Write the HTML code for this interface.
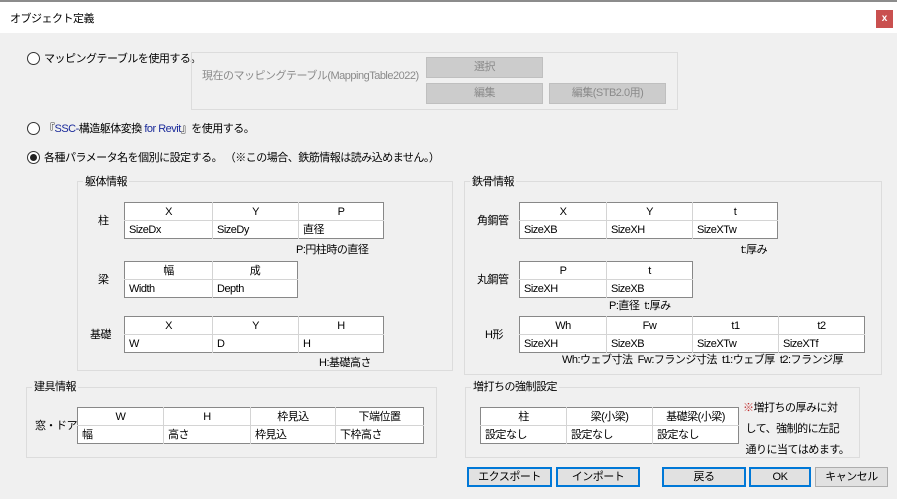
<!DOCTYPE html>
<html><head><meta charset="utf-8"><style>
*{margin:0;padding:0;box-sizing:border-box}
body{width:897px;height:499px;background:#f0f0f0;font-family:"Liberation Sans","Noto Sans CJK JP",sans-serif;font-size:11px;letter-spacing:-0.5px;color:#000;position:relative;overflow:hidden}
.a{position:absolute;white-space:nowrap;line-height:14px;margin-top:1px}
.title{position:absolute;left:0;top:0;width:897px;height:33px;background:#fff;border-top:2px solid #8c8c8c}
.close{position:absolute;left:876px;top:10px;width:17px;height:18px;background:#c9504f;color:#fff;font-size:10px;font-weight:bold;text-align:center;line-height:17px;letter-spacing:0}
.radio{position:absolute;width:13px;height:13px;border:1px solid #333;border-radius:50%;background:#fff}
.radio.on::after{content:"";position:absolute;left:2px;top:2px;width:7px;height:7px;border-radius:50%;background:#222}
.grp{position:absolute;border:1px solid #dcdcdc}
.gl{position:absolute;background:#f0f0f0;padding:0 2px;line-height:14px;white-space:nowrap}
.btn{position:absolute;background:#cccccc;border:1px solid #bfbfbf;color:#8a8a8a;text-align:center;line-height:18px}
table{position:absolute;border-collapse:collapse;background:#fff;border:1px solid #888;table-layout:fixed}
td{border-left:1px solid #d4d4d4;height:18px;line-height:16px;padding:0 4px;white-space:nowrap;overflow:hidden}
tr:first-child td{text-align:center;border-bottom:1px solid #d4d4d4}
td:first-child{border-left:none}
.b{position:absolute;background:#e1e1e1;border:2px solid #0078d7;text-align:center;line-height:16px;height:20px}
</style></head><body>
<div class="title"></div>
<div class="a" style="left:10px;top:11px">オブジェクト定義</div>
<div class="close">x</div>

<div class="radio" style="left:27px;top:52px"></div>
<div class="a" style="left:44px;top:51px">マッピングテーブルを使用する。</div>
<div class="grp" style="left:191px;top:52px;width:487px;height:58px"></div>
<div class="a" style="left:202px;top:68px;color:#8a8a8a">現在のマッピングテーブル(MappingTable2022)</div>
<div class="btn" style="left:426px;top:57px;width:117px;height:21px">選択</div>
<div class="btn" style="left:426px;top:83px;width:117px;height:21px">編集</div>
<div class="btn" style="left:549px;top:83px;width:117px;height:21px">編集(STB2.0用)</div>

<div class="radio" style="left:27px;top:122px"></div>
<div class="a" style="left:44px;top:121px">『<span style="color:#1a2a9a">SSC-</span>構造躯体変換 <span style="color:#1a2a9a">for Revit</span>』を使用する。</div>
<div class="radio on" style="left:27px;top:151px"></div>
<div class="a" style="left:44px;top:150px">各種パラメータ名を個別に設定する。 （※この場合、鉄筋情報は読み込めません。）</div>

<div class="grp" style="left:77px;top:181px;width:376px;height:190px"></div>
<div class="gl" style="left:83px;top:175px">躯体情報</div>
<div class="a" style="left:98px;top:213px">柱</div>
<table style="left:124px;top:202px;width:260px"><tr><td style="width:88px">X</td><td style="width:86px">Y</td><td>P</td></tr><tr><td>SizeDx</td><td>SizeDy</td><td>直径</td></tr></table>
<div class="a" style="left:296px;top:242px">P:円柱時の直径</div>
<div class="a" style="left:98px;top:272px">梁</div>
<table style="left:124px;top:261px;width:174px"><tr><td style="width:88px">幅</td><td>成</td></tr><tr><td>Width</td><td>Depth</td></tr></table>
<div class="a" style="left:90px;top:327px">基礎</div>
<table style="left:124px;top:316px;width:260px"><tr><td style="width:88px">X</td><td style="width:86px">Y</td><td>H</td></tr><tr><td>W</td><td>D</td><td>H</td></tr></table>
<div class="a" style="left:319px;top:355px">H:基礎高さ</div>

<div class="grp" style="left:464px;top:181px;width:418px;height:194px"></div>
<div class="gl" style="left:470px;top:175px">鉄骨情報</div>
<div class="a" style="left:477px;top:213px">角鋼管</div>
<table style="left:519px;top:202px;width:259px"><tr><td style="width:87px">X</td><td style="width:86px">Y</td><td>t</td></tr><tr><td>SizeXB</td><td>SizeXH</td><td>SizeXTw</td></tr></table>
<div class="a" style="left:741px;top:242px">t:厚み</div>
<div class="a" style="left:477px;top:272px">丸鋼管</div>
<table style="left:519px;top:261px;width:174px"><tr><td style="width:87px">P</td><td>t</td></tr><tr><td>SizeXH</td><td>SizeXB</td></tr></table>
<div class="a" style="left:609px;top:298px">P:直径&nbsp; t:厚み</div>
<div class="a" style="left:485px;top:327px">H形</div>
<table style="left:519px;top:316px;width:346px"><tr><td style="width:87px">Wh</td><td style="width:86px">Fw</td><td style="width:86px">t1</td><td>t2</td></tr><tr><td>SizeXH</td><td>SizeXB</td><td>SizeXTw</td><td>SizeXTf</td></tr></table>
<div class="a" style="left:562px;top:352px">Wh:ウェブ寸法&nbsp; Fw:フランジ寸法&nbsp; t1:ウェブ厚&nbsp; t2:フランジ厚</div>

<div class="grp" style="left:26px;top:387px;width:411px;height:71px"></div>
<div class="gl" style="left:32px;top:380px">建具情報</div>
<div class="a" style="left:35px;top:418px">窓・ドア</div>
<table style="left:77px;top:407px;width:347px"><tr><td style="width:86px">W</td><td style="width:87px">H</td><td style="width:85px">枠見込</td><td>下端位置</td></tr><tr><td>幅</td><td>高さ</td><td>枠見込</td><td>下枠高さ</td></tr></table>

<div class="grp" style="left:465px;top:387px;width:395px;height:71px"></div>
<div class="gl" style="left:471px;top:380px">増打ちの強制設定</div>
<table style="left:480px;top:407px;width:259px"><tr><td style="width:86px">柱</td><td style="width:86px">梁(小梁)</td><td>基礎梁(小梁)</td></tr><tr><td>設定なし</td><td>設定なし</td><td>設定なし</td></tr></table>
<div class="a" style="left:743px;top:397px;line-height:21px"><span style="color:#c03030">※</span>増打ちの厚みに対<br>&nbsp;して、強制的に左記<br>&nbsp;通りに当てはめます。</div>

<div class="b" style="left:467px;top:467px;width:85px">エクスポート</div>
<div class="b" style="left:556px;top:467px;width:84px">インポート</div>
<div class="b" style="left:662px;top:467px;width:84px">戻る</div>
<div class="b" style="left:749px;top:467px;width:62px">OK</div>
<div class="b" style="left:815px;top:467px;width:73px;border:1px solid #adadad;line-height:18px">キャンセル</div>
</body></html>
